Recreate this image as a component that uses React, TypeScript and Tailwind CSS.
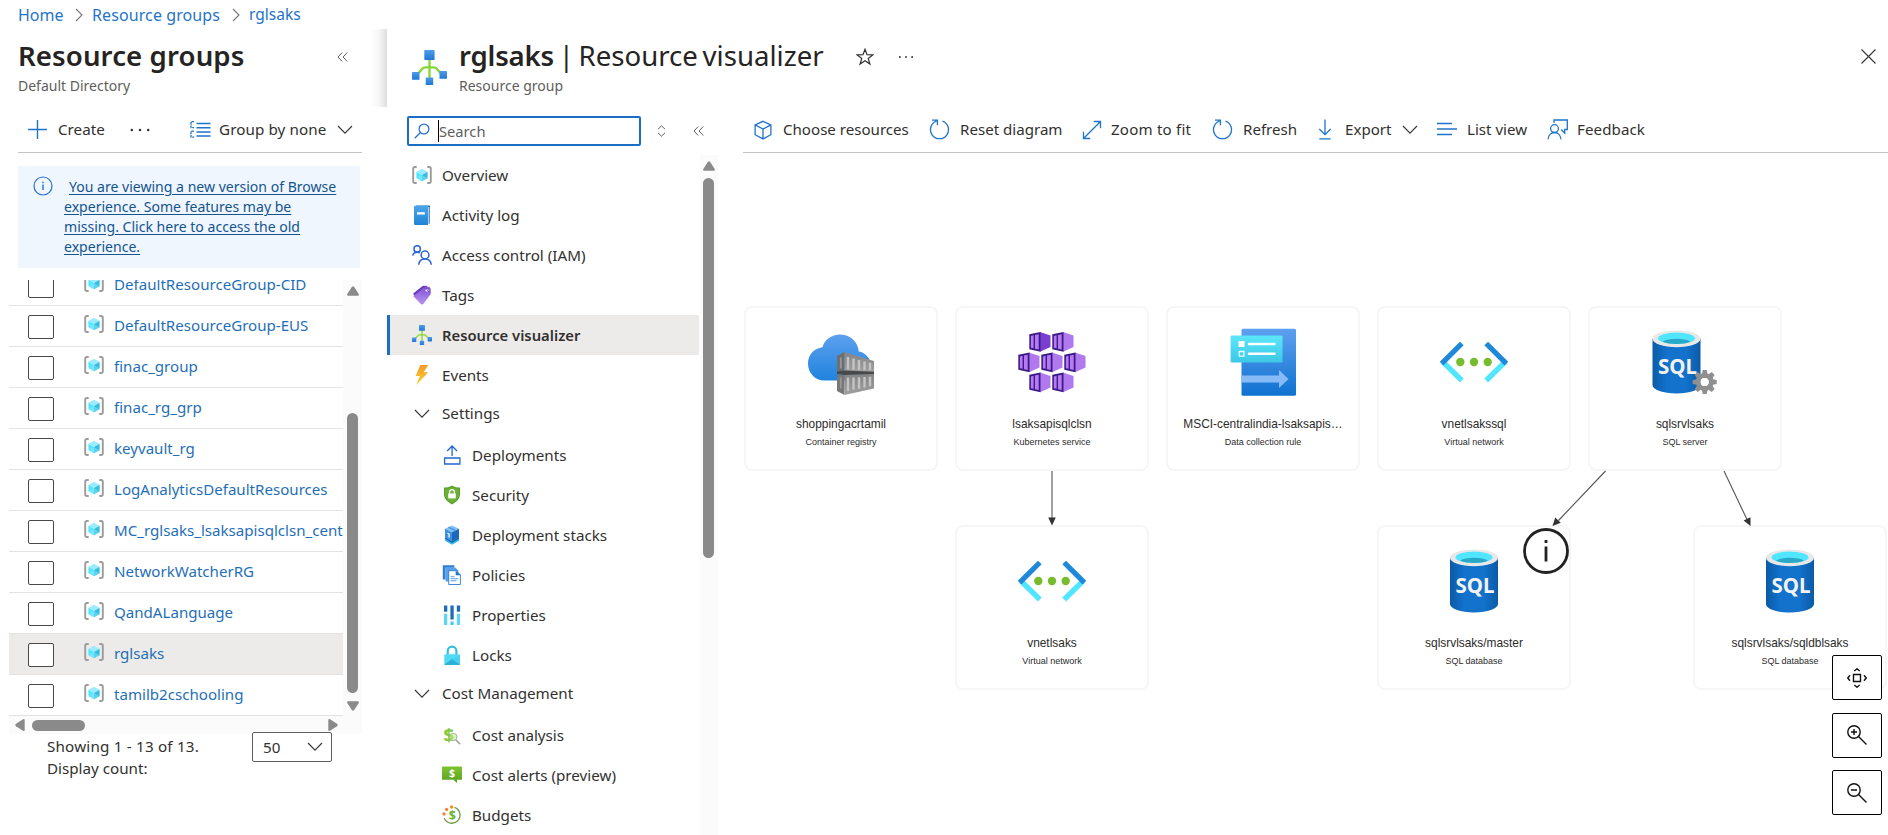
import React from "react";

type P = { className?: string };

/* ---------- Portal icons ---------- */

const ChevronDown = ({ className = "" }: P) => (
  <svg className={`h-[10px] w-[16px] shrink-0 ${className}`} viewBox="0 0 16 10" fill="none" stroke="#3b3a39" strokeWidth="1.2">
    <path d="M1 1l7 7.2L15 1" />
  </svg>
);

const CrumbChevron = () => (
  <svg className="h-[14px] w-[8px] shrink-0" viewBox="0 0 8 14" fill="none" stroke="#777" strokeWidth="1.1">
    <path d="M1 1l6 6-6 6" />
  </svg>
);

const DoubleLeft = () => (
  <svg className="h-[10px] w-[11px] shrink-0" viewBox="0 0 11 10" fill="none" stroke="#605e5c" strokeWidth="1">
    <path d="M5.2.5L1 5l4.200 4.500M10.300.5L6.100 5l4.200 4.500" />
  </svg>
);

const Dots = ({ className = "" }: P) => (
  <svg className={`h-[4px] w-[20px] shrink-0 ${className}`} viewBox="0 0 20 4" fill="#323130">
    <circle cx="1.800" cy="2" r="1.250" /><circle cx="10" cy="2" r="1.250" /><circle cx="18.200" cy="2" r="1.250" />
  </svg>
);

const GroupIcon = () => (
  <svg className="h-[18px] w-[20px] shrink-0" viewBox="0 0 20 18">
    <path d="M4.700 1H3Q1.200 1 1.200 2.800V15.200Q1.200 17 3 17H4.700M15.300 1H17Q18.800 1 18.800 2.800V15.200Q18.800 17 17 17H15.300" fill="none" stroke="#9b9b9b" strokeWidth="1.900" />
    <path d="M10 2.700L15.600 5.800 10 9 4.400 5.800z" fill="#9cebff" />
    <path d="M4.400 5.800L10 9v6.300l-5.600-3.100z" fill="#50e6ff" />
    <path d="M15.600 5.800L10 9v6.300l5.600-3.100z" fill="#32bedd" />
    <path d="M4.400 12.200L10 9l5.600 3.200L10 15.300z" fill="#9cebff" opacity=".45" />
  </svg>
);

const BookIcon = () => (
  <svg className="h-[20px] w-[20px]" viewBox="0 0 20 20">
    <defs><linearGradient id="bk" x1="0" y1="0" x2="0" y2="1"><stop offset="0" stopColor="#4ba6ea" /><stop offset="1" stopColor="#2283d6" /></linearGradient></defs>
    <path d="M4 .5h13.300q.7 0 .7.700V18.500H16V1.600H3z" fill="#1b6fb8" />
    <path d="M16.300 2h1v16.500h-1z" fill="#e8f4fd" />
    <path d="M2 2q0-1.300 1.500-1.300H16V20H3.200Q2 20 2 18.700z" fill="url(#bk)" />
    <path d="M5 7.200h7.800v2.300H5z" fill="#fff" />
  </svg>
);

const PeopleIcon = () => (
  <svg className="h-[20px] w-[20px]" viewBox="0 0 20 20" fill="none" stroke="#2a68d4" strokeWidth="1.500">
    <circle cx="5.200" cy="3.900" r="3.200" /><path d="M.7 10.600C1 8.600 2.700 7.200 5.200 7.200c1 0 1.900.3 2.600.8" />
    <circle cx="13" cy="10" r="3.900" /><path d="M6.700 19.700c.3-3.300 2.700-5.800 6.300-5.800s6 2.500 6.300 5.800" />
  </svg>
);

const TagIcon = () => (
  <svg className="h-[20px] w-[20px]" viewBox="0 0 20 20">
    <defs><linearGradient id="tg" x1="0" y1="0" x2="0" y2="1"><stop offset="0" stopColor="#8350cf" /><stop offset="1" stopColor="#b796f9" /></linearGradient></defs>
    <path d="M10.300 1.200q.7-.6 1.600-.5l3.600.2-9.200 10.900-4.800-2.200q-.6-.7 0-1.300z" fill="#6a35c4" />
    <path d="M12 2.300q.6-.6 1.500-.5l3.700.4q1 .2 1.100 1.200l.3 4.900q0 .8-.5 1.300L10.800 19q-.7.700-1.400 0L2.200 11.800q-.7-.7 0-1.400z" fill="url(#tg)" stroke="#7444be" strokeWidth=".4" />
    <circle cx="15" cy="5.300" r="1.400" fill="#fff" /><path d="M13.800 3.100l3.300 4.200" stroke="#5a2eae" strokeWidth=".8" />
  </svg>
);

const VisualizerIcon = ({ className = "h-[20px] w-[20px]" }: P) => (
  <svg className={className} viewBox="0 0 35 35">
    <defs><linearGradient id="vz" x1="0" y1="0" x2="0" y2="1"><stop offset="0" stopColor="#4f9ae8" /><stop offset="1" stopColor="#1f78d4" /></linearGradient></defs>
    <path d="M17.500 9v20M4 26l6-7q1.200-1.600 3.400-1.600h8.200q2.200 0 3.400 1.600l6 7" fill="none" stroke="#86d633" strokeWidth="2.300" />
    <g fill="url(#vz)">
      <rect x="12.300" y="0" width="10.300" height="10" rx=".7" /><rect x="0" y="22" width="7.500" height="7.800" rx=".6" />
      <rect x="13.700" y="27.500" width="7.500" height="7.500" rx=".6" /><rect x="27.500" y="21" width="7.500" height="7.800" rx=".6" />
    </g>
  </svg>
);

const BoltIcon = () => (
  <svg className="h-[20px] w-[20px]" viewBox="0 0 20 20">
    <defs><linearGradient id="bt" x1="0" y1="0" x2="0" y2="1"><stop offset="0" stopColor="#f29a27" /><stop offset="1" stopColor="#ffd12e" /></linearGradient></defs>
    <path d="M8.300 0h8L11.600 7.300h4.600L4.300 20l3.600-9H3.600z" fill="url(#bt)" />
  </svg>
);

const UploadIcon = () => (
  <svg className="h-[20px] w-[20px]" viewBox="0 0 20 20" fill="none" stroke="#2465cf" strokeWidth="1.300">
    <path d="M2.600 13h15.300v6H2.600zM10.100 11V1M5.200 6L10.100 1 15 6" />
  </svg>
);

const ShieldIcon = () => (
  <svg className="h-[20px] w-[20px]" viewBox="0 0 20 20">
    <path d="M10 .6c2.500 1.700 5 2 8 2v6.500c0 5-4 8.300-8 10.300-4-2-8-5.300-8-10.300V2.600c3 0 5.500-.3 8-2z" fill="#559b25" />
    <path d="M10 2c2.300 1.200 4.400 1.600 7 1.600v5.300c0 4.300-3.400 7.400-7 9.200-3.600-1.800-7-4.900-7-9.200V3.600c2.600 0 4.700-.4 7-1.600z" fill="#6db037" />
    <path d="M6.200 8.400h7.600v5H6.200z" fill="#fff" />
    <path d="M7.600 8.500V7a2.400 2.400 0 014.800 0v1.500" fill="none" stroke="#fff" strokeWidth="1.300" />
  </svg>
);

const StacksIcon = () => (
  <svg className="h-[20px] w-[20px]" viewBox="0 0 20 20">
    <path d="M3 14l7 3 7-3v1.700L10 19.700l-7-4z" fill="#35b9ea" /><path d="M3 12l7 4 7-4v2l-7 4-7-4z" fill="#1468b8" />
    <path d="M10 .5L17 3.800 10 7.200 3 3.800z" fill="#82c0f5" /><path d="M3 3.800l7 3.400v9l-7-3.600z" fill="#3f90df" />
    <path d="M17 3.800l-7 3.400v9l7-3.600z" fill="#1b68bd" /><path d="M6.500 2.200l7 3.400" stroke="#4597e5" strokeWidth="1.400" />
    <path d="M5.500 8.200l1.600.9v3.300" stroke="#fff" strokeWidth="1.200" fill="none" />
  </svg>
);

const PoliciesIcon = () => (
  <svg className="h-[20px] w-[20px]" viewBox="0 0 20 20">
    <path d="M.8.300h11.500v2.500H3.600v11.700H.8z" fill="#2f7fd6" /><path d="M3.600 2.500h9.700l3 3v11H3.600z" fill="#5c9fea" />
    <path d="M6.700 5.700h7.500l4.200 4.200v9.600H6.700z" fill="#fff" stroke="#2e7ad0" strokeWidth=".9" />
    <path d="M13.700 5.500l5 4.800h-5z" fill="#2273cb" />
    <path d="M8.500 11.700h4M8.500 13.700h8M8.500 15.700h6" stroke="#5c9fea" strokeWidth="1.100" />
  </svg>
);

const PropertiesIcon = () => (
  <svg className="h-[20px] w-[20px]" viewBox="0 0 20 20">
    <path d="M2 .5h3.300v6.200H2z" fill="#1c6cb9" /><path d="M2 8.700h3.300V20H2z" fill="#62d5f3" />
    <path d="M8.400.5h3.300v14H8.400z" fill="#1c6cb9" /><path d="M8.400 16.500h3.300V20H8.400z" fill="#50c8ee" />
    <path d="M14.800.5h3.300v6.200h-3.300z" fill="#1c6cb9" /><path d="M14.800 8.700h3.300V20h-3.300z" fill="#62d5f3" />
  </svg>
);

const LockIcon = () => (
  <svg className="h-[20px] w-[20px]" viewBox="0 0 20 20">
    <path d="M5.700 10V6a4.300 4.300 0 018.700 0v4" fill="none" stroke="#32bedd" strokeWidth="2.200" />
    <rect x="2.300" y="9.300" width="15.600" height="10.700" rx=".8" fill="#50dcf6" />
    <path d="M2.300 19.400L10 14l7.900 5.400q-.2.600-.8.600H3q-.5 0-.7-.6z" fill="#2db2d6" />
    <path d="M2.300 10L10 14.500 17.900 10v9.300L10 14z" fill="#3dcbe9" opacity=".6" />
  </svg>
);

const CostIcon = () => (
  <svg className="h-[20px] w-[20px]" viewBox="0 0 20 20">
    <text x="6.800" y="16.500" textAnchor="middle" fontFamily="Noto Sans" fontWeight="800" fontSize="18.500" fill="#84c93d">$</text>
    <path d="M13.500 14.500l4.600 4.700" stroke="#a5a5a5" strokeWidth="1.700" />
    <circle cx="11.300" cy="12" r="3.700" fill="#c5ee8c" fillOpacity=".6" stroke="#a9b3a0" strokeWidth="1" />
  </svg>
);

const AlertsIcon = () => (
  <svg className="h-[20px] w-[20px]" viewBox="0 0 20 20">
    <defs><linearGradient id="al" x1="0" y1="0" x2="0" y2="1"><stop offset="0" stopColor="#7cc52f" /><stop offset="1" stopColor="#5b9f22" /></linearGradient></defs>
    <path d="M.7 1.500h18.600q.7 0 .7.700v12.600h-5v3.200l-3.600-3.200H0V2.200q0-.7.700-.7z" fill="url(#al)" />
    <text x="10" y="12" textAnchor="middle" fontFamily="Noto Sans" fontWeight="700" fontSize="10.500" fill="#fff">$</text>
  </svg>
);

const BudgetIcon = () => (
  <svg className="h-[20px] w-[20px]" viewBox="0 0 20 20">
    <path d="M12.500 2.300a8.200 8.200 0 11-10.200 11" fill="none" stroke="#6b9a3c" strokeWidth="1.300" />
    <circle cx="9.600" cy="2" r="1.700" fill="#f78d1e" /><circle cx="4.600" cy="4.400" r="1.700" fill="#f2853f" /><circle cx="2" cy="9" r="1.700" fill="#f2853f" />
    <text x="10.300" y="15" textAnchor="middle" fontFamily="Noto Sans" fontWeight="700" fontSize="12.500" fill="#6cb52d">$</text>
  </svg>
);

/* ---------- Command bar icons ---------- */

const stroke = { fill: "none", stroke: "#1f74c9", strokeWidth: 1.3 };

const CubeOutline = () => (
  <svg className="h-[20px] w-[20px] shrink-0" viewBox="0 0 20 20" {...stroke}><path d="M10 1.300l7.900 3.600v9.800L10 18.900l-7.900-4.200V4.900zM2.100 4.900L10 9l7.900-4.100M10 9v9.900" /></svg>
);
const RefreshIcon = () => (
  <svg className="h-[21px] w-[21px] shrink-0" viewBox="0 0 21 21" {...stroke}><path d="M7.500 2.200A9 9 0 1013.500 2.200M3 1.100h5.400v5.200" /></svg>
);
const FitIcon = () => (
  <svg className="h-[20px] w-[20px] shrink-0" viewBox="0 0 20 20" {...stroke}><path d="M1.500 18.500l17-17M11.800 1.500h6.700v6.700M1.500 11.800v6.700h6.700" /></svg>
);
const ExportIcon = () => (
  <svg className="h-[21px] w-[16px] shrink-0" viewBox="0 0 16 21" {...stroke}><path d="M8 .5v15M2.300 10L8 15.700 13.700 10M2.300 19.800h11.400" /></svg>
);
const ListIcon = () => (
  <svg className="h-[20px] w-[22px] shrink-0" viewBox="0 0 22 20" {...stroke}><path d="M1 3.500h15M1 9h20M1 14.500h15" /></svg>
);
const FeedbackIcon = () => (
  <svg className="h-[21px] w-[21px] shrink-0" viewBox="0 0 21 21" {...stroke}>
    <path d="M7 4V1h13.300v9.500h-2.600v3.700l-3.600-3.700" /><circle cx="7.500" cy="9.600" r="3.900" /><path d="M1 20.300c.4-4 3-6.800 6.500-6.800s6.100 2.800 6.500 6.800" />
  </svg>
);
const GroupByIcon = () => (
  <svg className="h-[17px] w-[21px] shrink-0" viewBox="0 0 21 17" fill="none" stroke="#1f74c9">
    <path d="M6.500 2.500h14M6.500 6.700h14M6.500 10.900h14M6.500 15.100h14" strokeWidth="1.500" />
    <path d="M4 .7H1v6h3M4 10.200H1v6h3" strokeWidth="1.300" strokeDasharray="2.600 .8" />
  </svg>
);

/* ---------- Left blade ---------- */

const groups = [
  { name: "DefaultResourceGroup-CID" }, { name: "DefaultResourceGroup-EUS" }, { name: "finac_group" },
  { name: "finac_rg_grp" }, { name: "keyvault_rg" }, { name: "LogAnalyticsDefaultResources" },
  { name: "MC_rglsaks_lsaksapisqlclsn_cent" }, { name: "NetworkWatcherRG" }, { name: "QandALanguage" },
  { name: "rglsaks", selected: true }, { name: "tamilb2cschooling" },
];

const Arrow = ({ className = "" }: P) => (
  <svg className={`h-[10px] w-[12px] shrink-0 ${className}`} viewBox="0 0 12 10" fill="#8a8a8a"><path d="M6 0.300Q6.700.3 7.200 1L11.700 8Q12.300 9.700 11 9.700H1Q-.3 9.700.3 8L4.800 1Q5.300.3 6 .3z" /></svg>
);

function LeftBlade() {
  return (
    <aside className="flex h-[806px] w-[387px] shrink-0 flex-col">
      <header className="flex h-[78px] shrink-0">
        <div className="w-[319px] pt-[8px] pl-[18px]">
          <h1 className="h-9 text-[27.600px] leading-9 font-semibold tracking-[0.100px] whitespace-nowrap text-[#252423]">Resource groups</h1>
          <p className="mt-[2px] text-[14px] leading-[22px] text-[#605e5c]">Default Directory</p>
        </div>
        <div className="pt-[23px] pl-[18px]"><DoubleLeft /></div>
        <div className="ml-auto h-[78px] w-[17px] bg-linear-to-r from-white via-[#f7f7f7] to-[#dedede]" />
      </header>
      <div className="ml-[18px] flex h-[46px] w-[344px] shrink-0 items-center border-b border-[#c4c4c4] pl-[10px] text-[15.200px]">
        <svg className="h-[19px] w-[19px]" viewBox="0 0 19 19" fill="none" stroke="#1f74c9" strokeWidth="1.400"><path d="M9.500 0v19M0 9.500h19" /></svg>
        <span className="ml-[11px] w-[72px]">Create</span>
        <Dots />
        <span className="ml-[40px]"><GroupByIcon /></span>
        <span className="ml-[8px] w-[118px] tracking-[0.100px] whitespace-nowrap">Group by none</span>
        <ChevronDown />
      </div>
      <div className="mt-[13px] ml-[18px] flex h-[102px] w-[342px] shrink-0 bg-[#eff6fe] pt-[11px]">
        <svg className="ml-[15px] h-[20px] w-[20px] shrink-0 -translate-y-px" viewBox="0 0 20 20"><circle cx="10" cy="10" r="9" fill="none" stroke="#2b6fd0" strokeWidth="1.200" /><path d="M10 8.500v5.500M10 5.700v1.500" stroke="#2b6fd0" strokeWidth="1.400" /></svg>
        <a className="ml-[11px] text-[14.050px] leading-5 whitespace-nowrap text-[#14548f] underline underline-offset-2">
          <span className="ml-[5px]">You are viewing a new version of Browse</span><br />experience. Some features may be<br />missing. Click here to access the old<br />experience.
        </a>
      </div>
      <div className="mt-[12px] ml-[9px] flex h-[436px] shrink-0">
        <ul className="h-[436px] w-[334px] overflow-hidden">
          {groups.map((g, i) => (
            <li key={g.name} className={`flex h-[41px] border-b border-[#e4e3e2] ${i === 0 ? "-mt-[15px]" : ""} ${g.selected ? "bg-[#edebe9]" : ""}`}>
              <span className="mt-[9px] ml-[19px] h-[24px] w-[26px] shrink-0 rounded-[2px] border border-[#4a4846] bg-white" />
              <span className="mt-[9px] ml-[30px]"><GroupIcon /></span>
              <span className="ml-[10px] text-[15.100px] leading-[39px] whitespace-nowrap text-[#1f6fb8]">{g.name}</span>
            </li>
          ))}
        </ul>
        <div className="flex w-[19px] flex-col items-center bg-[#fbfbfb] pt-[6px]">
          <Arrow />
          <div className="mt-[117px] h-[280px] w-[11px] rounded-full bg-[#8a8a8a]" />
          <Arrow className="mt-[8px] rotate-180" />
        </div>
      </div>
      <div className="ml-[9px] flex h-[18px] w-[353px] shrink-0 items-center bg-[#fbfbfb] pl-[5px]">
        <Arrow className="-rotate-90" />
        <div className="ml-[6px] h-[11px] w-[53px] rounded-full bg-[#8a8a8a]" />
        <Arrow className="ml-[242px] rotate-90" />
      </div>
      <div className="-mt-[2px] flex pl-[47px] text-[15.200px] leading-[22px]">
        <p className="mt-[3px] w-[205px] tracking-[0.200px] whitespace-nowrap">Showing 1 - 13 of 13.<br /><span className="tracking-normal">Display count:</span></p>
        <div className="flex h-[30px] w-[80px] items-center justify-between rounded-[2px] border border-[#605e5c] bg-white pr-[8px] pb-px pl-[10px]">50<ChevronDown /></div>
      </div>
    </aside>
  );
}

/* ---------- Resource menu ---------- */

type Item = { label: string; icon?: React.ReactNode; kind?: "section" | "sub"; active?: boolean };

const menu: Item[] = [
  { label: "Overview", icon: <GroupIcon /> },
  { label: "Activity log", icon: <BookIcon /> },
  { label: "Access control (IAM)", icon: <PeopleIcon /> },
  { label: "Tags", icon: <TagIcon /> },
  { label: "Resource visualizer", icon: <VisualizerIcon />, active: true },
  { label: "Events", icon: <BoltIcon /> },
  { label: "Settings", kind: "section" },
  { label: "Deployments", icon: <UploadIcon />, kind: "sub" },
  { label: "Security", icon: <ShieldIcon />, kind: "sub" },
  { label: "Deployment stacks", icon: <StacksIcon />, kind: "sub" },
  { label: "Policies", icon: <PoliciesIcon />, kind: "sub" },
  { label: "Properties", icon: <PropertiesIcon />, kind: "sub" },
  { label: "Locks", icon: <LockIcon />, kind: "sub" },
  { label: "Cost Management", kind: "section" },
  { label: "Cost analysis", icon: <CostIcon />, kind: "sub" },
  { label: "Cost alerts (preview)", icon: <AlertsIcon />, kind: "sub" },
  { label: "Budgets", icon: <BudgetIcon />, kind: "sub" },
];

function MenuRow({ item }: { item: Item }) {
  if (item.kind === "section")
    return (
      <li className="flex h-10 items-center pb-[3px] pl-[27px]">
        <ChevronDown /><span className="ml-[12px] text-[15.200px]">{item.label}</span>
      </li>
    );
  return (
    <li className={`flex h-10 items-center ${item.active ? "border-l-[3px] border-[#1a6fc4] bg-[#edebe9] pl-[22px] font-semibold" : item.kind === "sub" ? "pl-[55px]" : "pl-[25px]"}`}>
      {item.icon}<span className={`ml-[10px] whitespace-nowrap ${item.active ? "text-[14.800px]" : "text-[15.200px]"}`}>{item.label}</span>
    </li>
  );
}

function ResourceMenu() {
  return (
    <nav className="flex w-[331px] shrink-0 flex-col">
      <div className="flex h-[48px] shrink-0 items-center pl-[20px]">
        <div className="flex h-[30px] w-[234px] items-center rounded-[2px] border-2 border-[#1a6fc4] bg-white pl-[5px]">
          <svg className="h-[16px] w-[16px]" viewBox="0 0 16 16" fill="none" stroke="#2b72cf" strokeWidth="1.300"><circle cx="10" cy="6" r="4.900" /><path d="M6.500 9.500L.7 15.300" /></svg>
          <span className="ml-[8px] h-[22px] w-px bg-black" />
          <span className="text-[14.700px] text-[#605e5c]">Search</span>
        </div>
        <svg className="ml-[16px] h-[12px] w-[9px]" viewBox="0 0 9 12" fill="none" stroke="#605e5c"><path d="M1 4.200L4.500.8 8 4.200M1 7.800l3.500 3.400L8 7.800" /></svg>
        <span className="ml-[27px]"><DoubleLeft /></span>
      </div>
      <div className="flex h-[680px] shrink-0">
        <ul className="w-[312px]">{menu.map((m) => <MenuRow key={m.label} item={m} />)}</ul>
        <div className="ml-px flex w-[18px] flex-col items-center bg-[#fbfbfb] pt-[6px] pr-[1px]">
          <Arrow />
          <div className="mt-[7px] h-[380px] w-[11px] rounded-full bg-[#8a8a8a]" />
        </div>
      </div>
    </nav>
  );
}

/* ---------- Diagram ---------- */

const Registry = () => (
  <svg className="h-[68px] w-[68px]" viewBox="0 0 68 68">
    <defs>
      <linearGradient id="cl" x1="0" y1="0" x2="0" y2="1"><stop offset="0" stopColor="#5ea0ef" /><stop offset="1" stopColor="#1f83dd" /></linearGradient>
      <linearGradient id="gy" x1="0" y1="0" x2="0" y2="1"><stop offset="0" stopColor="#848484" /><stop offset="1" stopColor="#a0a0a0" /></linearGradient>
    </defs>
    <path d="M17.500 52.500C8 52.500 1 45 1 35.500 1 27 7 20.300 15.500 19.300 17 12 24.500 6.500 33 6.500c10 0 18 7 18.800 17C58 24.500 64 30 64 38.500S57 52.500 49 52.500z" fill="url(#cl)" />
    <path d="M30 28l7.500-4v20.500L30 43.500z" fill="#6e6e6e" /><path d="M37.500 24L67 33v11l-29.500.5z" fill="url(#gy)" />
    <path d="M30 43.500l7.500-1 29.500 1.300v2.700L37.500 47 30 46z" fill="#494949" />
    <path d="M30 46.500l7.500.5v20L30 63z" fill="#777" /><path d="M37.500 47L67 46v14.500L37.500 67z" fill="url(#gy)" />
    <path d="M41 29v12.500M46.500 30.500v11.300M52 32v10M57.500 33.500v8.700M63 35v7.300M41 49.500v13.500M46.500 49.500v12.300M52 49.200v11.500M57.500 49v10.500M63 48.700v9.500" stroke="#c4c4c4" strokeWidth="2.400" />
    <path d="M33.800 29.500v11M33.800 49.500v11" stroke="#989898" strokeWidth="1.800" />
  </svg>
);

const pods = [[11, 4], [34, 4], [0, 24.5], [23, 24.5], [46, 24.5], [11, 44.500], [34, 44.500]];
const Kubernetes = () => (
  <svg className="h-[68px] w-[68px]" viewBox="0 0 68 68">
    {pods.map(([x, y], i) => (
      <g key={i} transform={`translate(${x} ${y})`}>
        <path d="M11 0l10.500 3.600V15L11 19.800z" fill={i === 0 ? "#7a3fd0" : "#b079ee"} />
        <path d="M.3 2.300L11.500 0v19.800L.3 17.300z" fill="#3b1c86" />
        <path d="M1.900 3.900l2.700-.6v13l-2.700-.6zM6 3l3.700-.8v15.400L6 16.700z" fill="#b77af4" />
      </g>
    ))}
  </svg>
);

const CollectionRule = () => (
  <svg className="h-[68px] w-[68px]" viewBox="0 0 68 68">
    <defs>
      <linearGradient id="dr" x1="0" y1="0" x2="0" y2="1"><stop offset="0" stopColor="#5ea0ef" /><stop offset="1" stopColor="#0f72d0" /></linearGradient>
      <linearGradient id="dc" x1="0" y1="0" x2="0" y2="1"><stop offset="0" stopColor="#5be6f8" /><stop offset="1" stopColor="#3cc8e6" /></linearGradient>
    </defs>
    <rect x="12.500" y=".7" width="54.500" height="67" rx="1.500" fill="url(#dr)" />
    <path d="M12.500 47.500H50V42l9.500 9L50 60v-5.500H12.500z" fill="#86bbf8" />
    <rect x="1.600" y="7.500" width="52" height="27" rx="1.300" fill="url(#dc)" />
    <path d="M9.500 13h6v6h-6z" fill="#fff" /><path d="M10.300 23.500h4.600v4.700h-4.600z" fill="none" stroke="#e8fbff" strokeWidth="1.300" />
    <path d="M20 16h25.500M20 25.800h25.500" stroke="#fff" strokeWidth="2.600" strokeLinecap="round" />
  </svg>
);

const VNet = () => (
  <svg className="h-[68px] w-[68px]" viewBox="0 0 68 68">
    <g fill="none" strokeWidth="5.300">
      <path d="M21.800 52.500L3 34M46.200 52.500L65 34" stroke="#50e6ff" />
      <path d="M21.800 15.500L1.600 35.700M46.200 15.500L66.400 35.700" stroke="#1e88d9" />
    </g>
    <g fill="#76bc2d"><circle cx="20.300" cy="34" r="4.200" /><circle cx="34" cy="34" r="4.200" /><circle cx="47.700" cy="34" r="4.200" /></g>
  </svg>
);

const teeth = [0, 45, 90, 135, 180, 225, 270, 315];
const Sql = ({ server = false }: { server?: boolean }) => (
  <svg className="h-[68px] w-[68px] overflow-visible" viewBox="0 0 68 68">
    <defs><linearGradient id="sq" x1="0" y1="0" x2="1" y2="0"><stop offset="0" stopColor="#0a5ba6" /><stop offset=".3" stopColor="#1272cc" /><stop offset=".7" stopColor="#1272cc" /><stop offset="1" stopColor="#0a5ba6" /></linearGradient></defs>
    <g transform={server ? "translate(-8.500 0)" : undefined}>
      <path d="M10 10.500v46.500c0 4.800 10.700 8.500 24 8.500s24-3.700 24-8.500V10.500z" fill="url(#sq)" />
      <ellipse cx="34" cy="10.800" rx="24" ry="8.400" fill="#e8e8e8" />
      <ellipse cx="34" cy="10.300" rx="18.500" ry="5.700" fill="#50e6ff" />
      <path d="M20 13.800c3-2.300 8-3 14-3s11 .7 14 3c-3.500 1.500-8.500 2.200-14 2.200s-10.500-.7-14-2.200z" fill="#2aa9c6" />
      <text x="15.500" y="46" textLength="39" lengthAdjust="spacingAndGlyphs" fontFamily="Noto Sans" fontWeight="700" fontSize="21.500" fill="#f2f2f2">SQL</text>
    </g>
    {server && (
      <g transform="translate(53.700 54)" fill="#8f8f8f">
        {teeth.map((a) => <path key={a} d="M-2-12h4l1 5h-6z" transform={`rotate(${a})`} />)}
        <circle r="6.400" fill="none" stroke="#8f8f8f" strokeWidth="5" /><circle r="4.100" fill="#fff" />
      </g>
    )}
  </svg>
);

const nodes = [
  { pos: "left-[1px] top-[153px]", name: "shoppingacrtamil", type: "Container registry", icon: <Registry /> },
  { pos: "left-[212px] top-[153px]", name: "lsaksapisqlclsn", type: "Kubernetes service", icon: <Kubernetes /> },
  { pos: "left-[423px] top-[153px]", name: "MSCI-centralindia-lsaksapis…", type: "Data collection rule", icon: <CollectionRule /> },
  { pos: "left-[634px] top-[153px]", name: "vnetlsakssql", type: "Virtual network", icon: <VNet /> },
  { pos: "left-[845px] top-[153px]", name: "sqlsrvlsaks", type: "SQL server", icon: <Sql server /> },
  { pos: "left-[212px] top-[372px]", name: "vnetlsaks", type: "Virtual network", icon: <VNet /> },
  { pos: "left-[634px] top-[372px]", name: "sqlsrvlsaks/master", type: "SQL database", icon: <Sql /> },
  { pos: "left-[950px] top-[372px]", name: "sqlsrvlsaks/sqldblsaks", type: "SQL database", icon: <Sql /> },
];

const ctl = { className: "h-[20px] w-[20px]", viewBox: "0 0 20 20", fill: "none", stroke: "#111", strokeWidth: 1.4 };
const ctlButton = "flex h-[45px] w-[50px] items-center justify-center rounded-[2px] border border-black bg-white";

function Diagram() {
  return (
    <div className="relative h-[682px] overflow-hidden">
      {nodes.map((n) => (
        <div key={n.name} className={`absolute flex h-[165px] w-[194px] flex-col items-center rounded-[8px] border-2 border-[#f6f6f6] bg-white pt-[20px] font-['Liberation_Sans',Arial,sans-serif] ${n.pos}`}>
          {n.icon}
          <div className="mt-[20px] text-[11.900px] leading-4 whitespace-nowrap text-[#2b2b2b]">{n.name}</div>
          <div className="mt-[4px] text-[9px] leading-3 whitespace-nowrap text-[#2b2b2b]">{n.type}</div>
        </div>
      ))}
      <svg className="absolute top-0 left-0 h-[682px] w-[1145px]" viewBox="0 0 1145 682" stroke="#555" strokeWidth="1.100">
        <path d="M309 318v48M862.500 318l-47 49.500M981 318l23 48.500" />
        <g fill="#333" stroke="none">
          <path d="M305.200 364.500h7.600L309 372.500z" />
          <path d="M0 0l-3.800-8h7.600z" transform="translate(809.500 373) rotate(43.500)" />
          <path d="M0 0l-3.800-8h7.600z" transform="translate(1007.500 373) rotate(-25.500)" />
        </g>
      </svg>
      <svg className="absolute top-[374px] left-[779px] h-[48px] w-[48px]" viewBox="0 0 48 48"><circle cx="24" cy="24" r="21.500" fill="#fff" stroke="#222" strokeWidth="2.800" /><path d="M24 19.500v15M24 13v3" stroke="#222" strokeWidth="2.800" /></svg>
      <div className="absolute top-[502px] left-[1089px] flex flex-col gap-[12.500px]">
        <button className={ctlButton}><svg {...ctl}><path d="M6.500 6.500h7v7h-7zM7.300 3L10 .8 12.700 3M7.300 17l2.700 2.200 2.700-2.200M3 7.300L.8 10 3 12.700M17 7.300l2.200 2.700-2.200 2.700" /></svg></button>
        <button className={ctlButton}><svg {...ctl}><circle cx="7" cy="7" r="6.200" /><path d="M11.500 11.500l8 8M4 7h6M7 4v6" /></svg></button>
        <button className={ctlButton}><svg {...ctl}><circle cx="7" cy="7" r="6.200" /><path d="M11.500 11.500l8 8M4 7h6" /></svg></button>
      </div>
    </div>
  );
}

function CommandBar() {
  return (
    <div className="flex h-[46px] items-center border-b border-[#c4c4c4] pl-[10px] text-[15.100px] whitespace-nowrap">
      <CubeOutline /><span className="ml-[10px] w-[146px]">Choose resources</span>
      <RefreshIcon /><span className="ml-[10px] w-[122px]">Reset diagram</span>
      <FitIcon /><span className="ml-[9px] w-[101px] tracking-[0.200px]">Zoom to fit</span>
      <RefreshIcon /><span className="ml-[10px] w-[74px]">Refresh</span>
      <ExportIcon /><span className="ml-[12px] w-[57px]">Export</span>
      <ChevronDown /><span className="ml-[18px]"><ListIcon /></span><span className="ml-[9px] w-[80px]">List view</span>
      <FeedbackIcon /><span className="ml-[9px] tracking-[0.100px]">Feedback</span>
    </div>
  );
}

export default function App() {
  return (
    <div className="flex h-[835px] w-[1888px] flex-col overflow-hidden bg-white font-['Noto_Sans','Open_Sans',sans-serif] text-[#323130]">
      <nav className="flex h-[29px] shrink-0 items-center pl-[18px] text-[16px] whitespace-nowrap text-[#1f74c9]">
        <a className="w-[57px] shrink-0">Home</a><CrumbChevron /><a className="ml-[9px] w-[140px] shrink-0 tracking-[0.100px]">Resource groups</a><CrumbChevron /><a className="ml-[9px] text-[15.500px]">rglsaks</a>
      </nav>
      <div className="flex">
        <LeftBlade />
        <main className="flex w-[1501px] flex-col">
          <header className="flex h-[78px] shrink-0 pl-[25px]">
            <VisualizerIcon className="mt-[21px] h-[35px] w-[35px] shrink-0" />
            <div className="ml-[12px] w-[397px] pt-[8px]">
              <h2 className="h-9 text-[27.600px] leading-9 whitespace-nowrap text-[#252423] [word-spacing:-2.500px]"><b className="font-semibold tracking-[-0.200px]">rglsaks</b> | Resource visualizer</h2>
              <p className="mt-[2px] text-[14px] leading-[22px] text-[#605e5c]">Resource group</p>
            </div>
            <svg className="mt-[19px] h-[18px] w-[18px]" viewBox="0 0 18 18" fill="none" stroke="#323130" strokeWidth="1.200"><path d="M9 1.300l2 5.400 5.800.2-4.600 3.500 1.700 5.600L9 12.800 4.100 16l1.700-5.600L1.200 6.900 7 6.700z" /></svg>
            <Dots className="mt-[26px] ml-[22px] scale-[0.75]" />
            <svg className="mt-[20px] mr-[12px] ml-auto h-[15px] w-[15px]" viewBox="0 0 15 15" fill="none" stroke="#3b3a39" strokeWidth="1.200"><path d="M.5.500l14 14M14.500.5l-14 14" /></svg>
          </header>
          <div className="flex">
            <ResourceMenu />
            <section className="ml-[25px] w-[1145px]"><CommandBar /><Diagram /></section>
          </div>
        </main>
      </div>
    </div>
  );
}
